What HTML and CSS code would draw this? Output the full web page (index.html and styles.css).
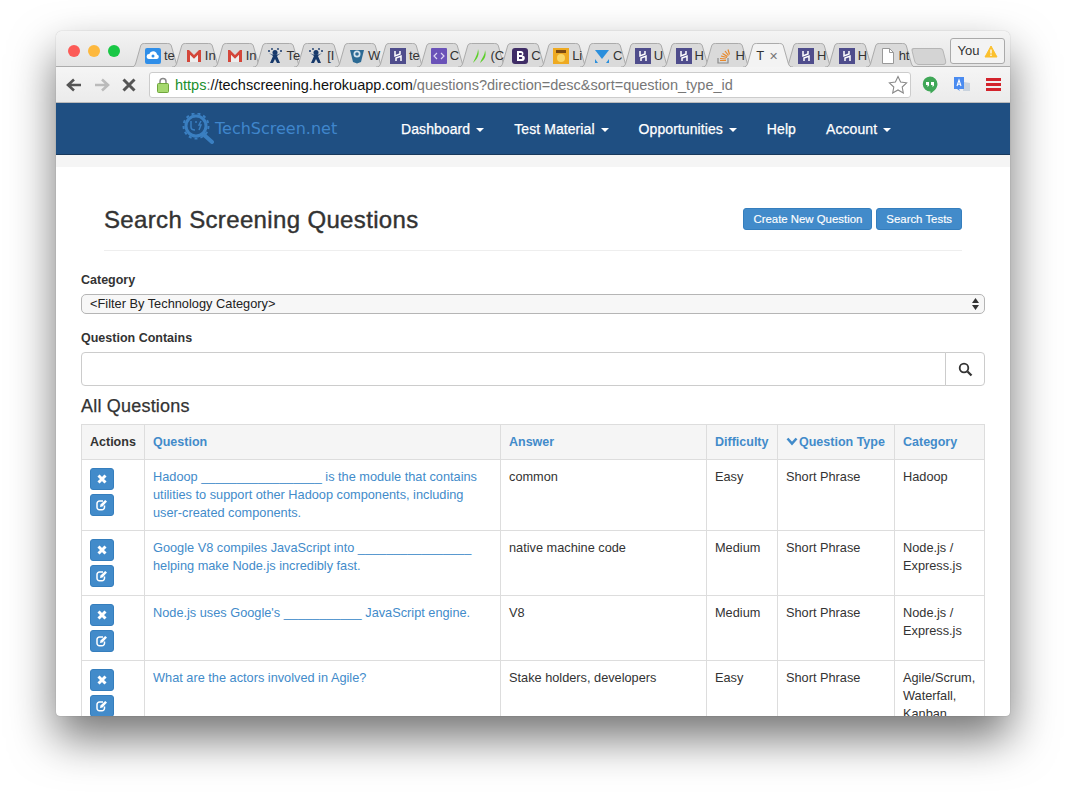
FILE: index.html
```html
<!DOCTYPE html>
<html lang="en">
<head>
    <meta charset="UTF-8">
    <title>Search Screening Questions</title>
    <link rel="stylesheet" href="styles.css">
</head>
<body>
    <svg class="defs" width="0" height="0">
        <symbol id="tab-bg" viewBox="0 0 52 24" preserveAspectRatio="none">
            <path d="M0 24C3 24 4 23 5 20L10 3C10.5 1 12 .5 14 .5H38C40 .5 41.5 1 42 3L47 20C48 23 49 24 52 24"/>
        </symbol>
        <symbol id="i-cloud" viewBox="0 0 16 16">
            <rect width="16" height="16" rx="2" fill="#2f8ee8"/>
            <path d="M4 11a2.5 2.5 0 0 1 .3-5A4 4 0 0 1 12 6.500a2.300 2.300 0 0 1 0 4.500z" fill="#fff"/>
            <circle cx="8" cy="8" r="1.500" fill="#2f8ee8"/>
        </symbol>
        <symbol id="i-gmail" viewBox="0 0 16 16">
            <path d="M1 14V2h2l5 5 5-5h2v12h-3V7L8 11 4 7v7z" fill="#d4463a"/>
            <path d="M4 14V7l4 4 4-4v7z" fill="#eee"/>
        </symbol>
        <symbol id="i-jira" viewBox="0 0 16 16">
            <circle cx="8" cy="4.500" r="2.500" fill="#17396b"/>
            <circle cx="2" cy="3" r="1" fill="#17396b"/><circle cx="14" cy="3" r="1" fill="#17396b"/>
            <circle cx="5" cy="1" r=".9" fill="#17396b"/><circle cx="11" cy="1" r=".9" fill="#17396b"/>
            <path d="M2 5l4 3-3 7h3l2-4 2 4h3l-3-7 4-3-3 1.500H5z" fill="#17396b"/>
        </symbol>
        <symbol id="i-bower" viewBox="0 0 16 16">
            <path d="M1 2h14l-1 4-2 8-4 1.500L4 14 2 6z" fill="#2c6a94"/>
            <circle cx="8" cy="6" r="3.500" fill="#d6e4ee"/><circle cx="8" cy="6" r="1.800" fill="#2c6a94"/>
        </symbol>
        <symbol id="i-heroku" viewBox="0 0 16 16">
            <rect width="16" height="16" fill="#4f4d8c"/>
            <path d="M5 3v5l5-2V3M11 13V8L6 10v3" fill="none" stroke="#fff" stroke-width="1.500"/>
        </symbol>
        <symbol id="i-code" viewBox="0 0 16 16">
            <rect width="16" height="16" rx="1" fill="#6a52b8"/>
            <path d="M6 5L3 8l3 3M10 5l3 3-3 3" fill="none" stroke="#dcd6f2" stroke-width="1.200"/>
        </symbol>
        <symbol id="i-green" viewBox="0 0 16 16">
            <path d="M6 1C6 6 3 10 1 15 5 11 8 7 6 1zM13 2c0 5-3 8-5 13 4-3 7-7 5-13z" fill="#5ccf2a"/>
        </symbol>
        <symbol id="i-boot" viewBox="0 0 16 16">
            <rect width="16" height="16" rx="3" fill="#3f2d66"/>
            <path d="M5 3h4a2.500 2.500 0 0 1 1.500 4.500A2.700 2.700 0 0 1 9.500 13H5zM7 5v2h2a1 1 0 0 0 0-2zM7 9v2h2.300a1 1 0 0 0 0-2z" fill="#fff" fill-rule="evenodd"/>
        </symbol>
        <symbol id="i-orange" viewBox="0 0 16 16">
            <rect width="16" height="16" fill="#eeaa22"/>
            <rect x="3" y="2" width="10" height="3" fill="#7b4a12"/>
            <circle cx="8" cy="10" r="4" fill="#f9d768"/>
        </symbol>
        <symbol id="i-vee" viewBox="0 0 16 16">
            <path d="M1 2h14L8 11z" fill="#2b8fdc"/>
            <path d="M1 11l3 4H1zM15 11l-3 4h3z" fill="#2b8fdc"/>
        </symbol>
        <symbol id="i-stack" viewBox="0 0 16 16">
            <path d="M2 10v5h10v-5" fill="none" stroke="#8a8a8a" stroke-width="1.200"/>
            <path d="M4 12.500h6M4 10.500l6 .5M5 8l6 1.500M6.500 5.500l5 3M9 3l3.500 4.500M12 1.500l1.500 5" fill="none" stroke="#e8882a" stroke-width="1.200"/>
        </symbol>
        <symbol id="i-doc" viewBox="0 0 16 16">
            <path d="M2.500 .5h7l4 4v11h-11z" fill="#fff" stroke="#999"/>
            <path d="M9.500 .5v4h4" fill="none" stroke="#999"/>
        </symbol>
        <symbol id="i-remove" viewBox="0 0 12 12">
            <path d="M2.500 2.500l7 7M9.500 2.500l-7 7" fill="none" stroke="#fff" stroke-width="3"/>
        </symbol>
        <symbol id="i-edit" viewBox="0 0 14 14">
            <path d="M9.500 7.500v1.800A2.500 2.500 0 0 1 7 11.800H4.500A2.500 2.500 0 0 1 2 9.300V5.500A2.500 2.500 0 0 1 4.500 3H8" fill="none" stroke="#fff" stroke-width="1.500"/>
            <path d="M5.500 6.500l-.5 2.500 2.500-.5 4.500-5-1.800-1.500z" fill="#fff"/>
        </symbol>
    </svg>

    <div class="window">
        <div class="tabstrip">
            <div class="lights">
                <span class="light red"></span>
                <span class="light amber"></span>
                <span class="light green"></span>
            </div>
            <div class="tabs">
                <div class="tab"><svg class="tab-bg"><use href="#tab-bg"/></svg><svg class="fav"><use href="#i-cloud"/></svg><span class="tab-label">te</span></div>
                <div class="tab"><svg class="tab-bg"><use href="#tab-bg"/></svg><svg class="fav"><use href="#i-gmail"/></svg><span class="tab-label">In</span></div>
                <div class="tab"><svg class="tab-bg"><use href="#tab-bg"/></svg><svg class="fav"><use href="#i-gmail"/></svg><span class="tab-label">In</span></div>
                <div class="tab"><svg class="tab-bg"><use href="#tab-bg"/></svg><svg class="fav"><use href="#i-jira"/></svg><span class="tab-label">Te</span></div>
                <div class="tab"><svg class="tab-bg"><use href="#tab-bg"/></svg><svg class="fav"><use href="#i-jira"/></svg><span class="tab-label">[I</span></div>
                <div class="tab"><svg class="tab-bg"><use href="#tab-bg"/></svg><svg class="fav"><use href="#i-bower"/></svg><span class="tab-label">W</span></div>
                <div class="tab"><svg class="tab-bg"><use href="#tab-bg"/></svg><svg class="fav"><use href="#i-heroku"/></svg><span class="tab-label">te</span></div>
                <div class="tab"><svg class="tab-bg"><use href="#tab-bg"/></svg><svg class="fav"><use href="#i-code"/></svg><span class="tab-label">C</span></div>
                <div class="tab"><svg class="tab-bg"><use href="#tab-bg"/></svg><svg class="fav"><use href="#i-green"/></svg><span class="tab-label">(C</span></div>
                <div class="tab"><svg class="tab-bg"><use href="#tab-bg"/></svg><svg class="fav"><use href="#i-boot"/></svg><span class="tab-label">C</span></div>
                <div class="tab"><svg class="tab-bg"><use href="#tab-bg"/></svg><svg class="fav"><use href="#i-orange"/></svg><span class="tab-label">Li</span></div>
                <div class="tab"><svg class="tab-bg"><use href="#tab-bg"/></svg><svg class="fav"><use href="#i-vee"/></svg><span class="tab-label">C</span></div>
                <div class="tab"><svg class="tab-bg"><use href="#tab-bg"/></svg><svg class="fav"><use href="#i-heroku"/></svg><span class="tab-label">U</span></div>
                <div class="tab"><svg class="tab-bg"><use href="#tab-bg"/></svg><svg class="fav"><use href="#i-heroku"/></svg><span class="tab-label">H</span></div>
                <div class="tab"><svg class="tab-bg"><use href="#tab-bg"/></svg><svg class="fav"><use href="#i-stack"/></svg><span class="tab-label">H</span></div>
                <div class="tab active"><svg class="tab-bg"><use href="#tab-bg"/></svg><span class="tab-label">T</span><span class="tab-close">&#10005;</span></div>
                <div class="tab"><svg class="tab-bg"><use href="#tab-bg"/></svg><svg class="fav"><use href="#i-heroku"/></svg><span class="tab-label">H</span></div>
                <div class="tab"><svg class="tab-bg"><use href="#tab-bg"/></svg><svg class="fav"><use href="#i-heroku"/></svg><span class="tab-label">H</span></div>
                <div class="tab"><svg class="tab-bg"><use href="#tab-bg"/></svg><svg class="fav"><use href="#i-doc"/></svg><span class="tab-label">ht</span></div>
            </div>
            <div class="newtab"></div>
            <div class="profile">You
                <svg width="14" height="13" viewBox="0 0 14 13"><path d="M7 1l6 11H1z" fill="#fbc02d" stroke="#fbc02d" stroke-linejoin="round"/><path d="M7 4.500v4M7 9.500v1.500" stroke="#fff" stroke-width="1.300"/></svg>
            </div>
        </div>

        <div class="toolbar">
            <svg class="tool" width="18" height="16" viewBox="0 0 18 16"><path d="M16 8H4M9 2.500L3 8l6 5.500" fill="none" stroke="#555" stroke-width="2.600"/></svg>
            <svg class="tool" width="18" height="16" viewBox="0 0 18 16"><path d="M2 8h12M9 2.500L15 8l-6 5.500" fill="none" stroke="#bbb" stroke-width="2.600"/></svg>
            <svg class="tool" width="16" height="16" viewBox="0 0 16 16"><path d="M2.500 2.500l11 11M13.500 2.500l-11 11" fill="none" stroke="#555" stroke-width="3"/></svg>
            <div class="omnibox">
                <svg class="lock" width="12" height="16" viewBox="0 0 12 16"><path d="M3 7V4.500a3 3 0 0 1 6 0V7" fill="none" stroke="#888" stroke-width="1.500"/><rect x=".5" y="6.500" width="11" height="9" rx="1" fill="#a5d86e" stroke="#6fa63c"/></svg>
                <span class="url"><span class="url-scheme">https</span><span class="url-rest">:</span><span class="url-host">//techscreening.herokuapp.com</span><span class="url-rest">/questions?direction=desc&amp;sort=question_type_id</span></span>
                <svg class="star" width="20" height="19" viewBox="0 0 20 19"><path d="M10 1.500l2.600 5.500 6 .8-4.400 4.200 1.100 6L10 15l-5.300 3 1.100-6L1.400 7.800l6-.8z" fill="#fff" stroke="#888" stroke-width="1.100"/></svg>
            </div>
            <div class="extensions">
                <svg width="16" height="18" viewBox="0 0 16 18"><path d="M8 .5a7.500 7.500 0 0 1 7.500 7.500c0 4.500-4 7.500-7 9.500v-2A7.500 7.500 0 0 1 8 .5z" fill="#3fa757"/><path d="M4 6h3v3.500L5.500 11V9H4zM9 6h3v3.500L10.500 11V9H9z" fill="#fff"/></svg>
                <svg width="18" height="18" viewBox="0 0 18 18"><path d="M11 6l6 1v8h-7z" fill="#c9d3de"/><path d="M1 1h10v12H6l1 2-3-2H1z" fill="#4a8bf0"/><path d="M4 10l2-6 2 6M4.800 8.300h2.400" fill="none" stroke="#fff" stroke-width="1.100"/></svg>
                <div class="hamburger"><span></span><span></span><span></span></div>
            </div>
        </div>

        <nav class="navbar">
            <a class="brand">
                <svg width="34" height="31" viewBox="0 0 34 31"><circle cx="14" cy="13" r="10" fill="none" stroke="#3a7fc1" stroke-width="3"/><circle cx="14" cy="13" r="12.500" fill="none" stroke="#3a7fc1" stroke-width="2" stroke-dasharray="3 3"/><path d="M21 21l9 8" stroke="#3a7fc1" stroke-width="4" stroke-linecap="round"/><path d="M9 8v6c0 2 2 3 4 3M13 9h2M19 8l-2 4 2 0-2 5" fill="none" stroke="#3a7fc1" stroke-width="1.500"/></svg>
                <span class="brand-name">TechScreen.net</span>
            </a>
            <ul class="nav-menu">
                <li>Dashboard <span class="caret"></span></li>
                <li>Test Material <span class="caret"></span></li>
                <li>Opportunities <span class="caret"></span></li>
                <li>Help</li>
                <li>Account <span class="caret"></span></li>
            </ul>
        </nav>
        <div class="nav-gap"></div>

        <main class="content">
            <div class="page-header">
                <h1>Search Screening Questions</h1>
                <div class="header-buttons">
                    <a class="btn">Create New Question</a>
                    <a class="btn">Search Tests</a>
                </div>
            </div>

            <label class="field-label">Category</label>
            <div class="select-wrap">
                <select class="filter-select">
                    <option>&lt;Filter By Technology Category&gt;</option>
                </select>
                <svg class="select-arrows" width="7" height="12" viewBox="0 0 7 12"><path d="M3.500 0L7 5H0zM3.500 12L0 7h7z" fill="#333"/></svg>
            </div>

            <label class="field-label">Question Contains</label>
            <div class="search-group">
                <input class="search-input" type="text">
                <button class="search-btn" type="button">
                    <svg width="15" height="15" viewBox="0 0 15 15"><circle cx="6" cy="6" r="4.300" fill="none" stroke="#333" stroke-width="1.800"/><path d="M9.500 9.500l4 4" stroke="#333" stroke-width="2.300"/></svg>
                </button>
            </div>

            <h2>All Questions</h2>
            <table class="questions">
                <thead>
                    <tr>
                        <th class="col-actions">Actions</th>
                        <th class="col-question"><a>Question</a></th>
                        <th class="col-answer"><a>Answer</a></th>
                        <th class="col-difficulty"><a>Difficulty</a></th>
                        <th class="col-type"><a><svg class="chevron" width="12" height="9" viewBox="0 0 12 9"><path d="M1.500 1.500L6 6.500l4.500-5" fill="none" stroke="#428bca" stroke-width="2.600"/></svg>Question Type</a></th>
                        <th class="col-category"><a>Category</a></th>
                    </tr>
                </thead>
                <tbody>
                    <tr>
                        <td><a class="btn-icon"><svg width="12" height="12"><use href="#i-remove"/></svg></a><a class="btn-icon"><svg width="14" height="14"><use href="#i-edit"/></svg></a></td>
                        <td><a>Hadoop _________________ is the module that contains utilities to support other Hadoop components, including user-created components.</a></td>
                        <td>common</td>
                        <td>Easy</td>
                        <td>Short Phrase</td>
                        <td>Hadoop</td>
                    </tr>
                    <tr>
                        <td><a class="btn-icon"><svg width="12" height="12"><use href="#i-remove"/></svg></a><a class="btn-icon"><svg width="14" height="14"><use href="#i-edit"/></svg></a></td>
                        <td><a>Google V8 compiles JavaScript into ________________ helping make Node.js incredibly fast.</a></td>
                        <td>native machine code</td>
                        <td>Medium</td>
                        <td>Short Phrase</td>
                        <td>Node.js / Express.js</td>
                    </tr>
                    <tr>
                        <td><a class="btn-icon"><svg width="12" height="12"><use href="#i-remove"/></svg></a><a class="btn-icon"><svg width="14" height="14"><use href="#i-edit"/></svg></a></td>
                        <td><a>Node.js uses Google's ___________ JavaScript engine.</a></td>
                        <td>V8</td>
                        <td>Medium</td>
                        <td>Short Phrase</td>
                        <td>Node.js / Express.js</td>
                    </tr>
                    <tr>
                        <td><a class="btn-icon"><svg width="12" height="12"><use href="#i-remove"/></svg></a><a class="btn-icon"><svg width="14" height="14"><use href="#i-edit"/></svg></a></td>
                        <td><a>What are the actors involved in Agile?</a></td>
                        <td>Stake holders, developers</td>
                        <td>Easy</td>
                        <td>Short Phrase</td>
                        <td>Agile/Scrum, Waterfall, Kanban</td>
                    </tr>
                </tbody>
            </table>
        </main>
    </div>
</body>
</html>
```

FILE: styles.css
```css
html, body {
    height: 100%;
}
body {
    margin: 0;
    padding: 31px 56px 0;
    box-sizing: border-box;
    background-color: #fff;
    overflow: hidden;
    font-family: "Liberation Sans", Arial, sans-serif;
    font-size: 12.75px;
    line-height: 18px;
    color: #333;
}
.defs {
    position: absolute;
}
.window {
    display: flex;
    flex-direction: column;
    width: 954px;
    height: 685px;
    overflow: hidden;
    border-radius: 6px 6px 4px 4px;
    background-color: #fff;
    box-shadow: 0 22px 45px rgba(0, 0, 0, 0.55), 0 0 1px rgba(0, 0, 0, 0.4);
}

/* browser chrome */
.tabstrip {
    display: flex;
    flex: none;
    height: 36px;
    box-sizing: border-box;
    background: linear-gradient(#f4f4f4, #e4e4e4);
    border-bottom: 1px solid #acacac;
}
.lights {
    display: flex;
    gap: 8px;
    width: 75px;
    padding: 14px 0 0 12px;
    box-sizing: border-box;
}
.light {
    width: 12px;
    height: 12px;
    border-radius: 50%;
}
.light.red { background-color: #fc5b57; }
.light.amber { background-color: #fdb83e; }
.light.green { background-color: #19c745; }
.tabs {
    display: flex;
    padding-top: 12px;
}
.tab {
    position: relative;
    display: flex;
    align-items: flex-start;
    gap: 3px;
    flex: none;
    width: 50px;
    height: 24px;
    margin-right: -9.2px;
    padding: 5px 0 0 14px;
    box-sizing: border-box;
    font-size: 13px;
    line-height: 16px;
    color: #333;
}
.tab-bg {
    position: absolute;
    left: 0;
    top: 0;
    width: 100%;
    height: 100%;
    fill: #dadada;
    stroke: #a9a9a9;
    stroke-width: 1;
}
.tab.active {
    z-index: 2;
    padding-left: 13px;
}
.tab.active .tab-bg {
    fill: #f3f3f3;
}
.fav {
    position: relative;
    flex: none;
    width: 16px;
    height: 16px;
}
.tab-label {
    position: relative;
    white-space: nowrap;
}
.tab-close {
    position: relative;
    margin-left: 2px;
    font-size: 11px;
    color: #777;
}
.newtab {
    width: 30px;
    height: 15px;
    margin: 17px 0 0 7px;
    border: 1px solid #b5b5b5;
    border-radius: 3px 3px 4px 4px;
    background-color: #d4d4d4;
    transform: skewX(14deg);
}
.profile {
    display: flex;
    align-items: center;
    justify-content: center;
    gap: 5px;
    width: 55px;
    height: 26px;
    margin: 7px 0 0 5px;
    box-sizing: border-box;
    border: 1px solid #aaa;
    border-radius: 3px;
    background-color: #f3f3f3;
    font-size: 13px;
}
.toolbar {
    display: flex;
    align-items: center;
    flex: none;
    height: 36px;
    padding-left: 9px;
    box-sizing: border-box;
    background: linear-gradient(#f5f5f5, #ebebeb);
    border-bottom: 1px solid #bbb;
}
.tool {
    flex: none;
    margin-right: 10px;
}
.omnibox {
    display: flex;
    align-items: center;
    width: 762px;
    height: 26px;
    margin-left: 2px;
    padding: 0 2px 0 7px;
    box-sizing: border-box;
    background-color: #fff;
    border: 1px solid #ccc;
    border-radius: 3px;
}
.lock {
    flex: none;
    margin-right: 6px;
}
.url {
    flex: 1;
    font-size: 14.5px;
    white-space: nowrap;
}
.url-scheme { color: #1a8f2c; }
.url-host { color: #111; }
.url-rest { color: #777; }
.extensions {
    display: flex;
    align-items: center;
    gap: 15px;
    margin-left: 11px;
}
.hamburger {
    display: flex;
    flex-direction: column;
    gap: 2px;
    width: 15px;
}
.hamburger span {
    height: 3px;
    background-color: #d3232c;
}

/* site navbar */
.navbar {
    display: flex;
    flex: none;
    height: 52px;
    box-sizing: border-box;
    background-color: #1f4f82;
    border-bottom: 1px solid #18395c;
}
.brand {
    display: flex;
    align-items: center;
    width: 204px;
    margin-left: 126px;
    box-sizing: border-box;
}
.brand-name {
    margin-left: -1px;
    font-family: "DejaVu Sans", sans-serif;
    font-size: 16px;
    color: #3f86cc;
}
.nav-menu {
    display: flex;
    margin: 0;
    padding: 0;
    list-style: none;
}
.nav-menu li {
    padding: 16px 15px;
    font-size: 14px;
    line-height: 20px;
    letter-spacing: 0.08px;
    color: #fff;
    -webkit-text-stroke: 0.25px #fff;
}
.caret {
    display: inline-block;
    width: 0;
    height: 0;
    margin-left: 2px;
    vertical-align: middle;
    border-top: 4px solid #fff;
    border-left: 4px solid transparent;
    border-right: 4px solid transparent;
}
.nav-gap {
    flex: none;
    height: 12px;
    background-color: #f5f5f5;
}

/* page */
.content {
    flex: 1;
    padding: 0 25px;
}
.page-header {
    display: flex;
    align-items: center;
    justify-content: space-between;
    height: 84px;
    margin: 0 23px 20px;
    padding-top: 23px;
    box-sizing: border-box;
    border-bottom: 1px solid #eee;
}
h1 {
    margin: 0;
    font-size: 24px;
    font-weight: 500;
    line-height: 26px;
    letter-spacing: 0.35px;
    color: #333;
    -webkit-text-stroke: 0.4px #333;
}
.header-buttons {
    display: flex;
    gap: 4px;
    margin-top: -2px;
}
.btn {
    padding: 2px 9px;
    font-size: 11.4px;
    line-height: 16px;
    color: #fff;
    background-color: #428bca;
    border: 1px solid #357ebd;
    border-radius: 3px;
    -webkit-text-stroke: 0.15px #fff;
}
.field-label {
    display: block;
    margin-bottom: 5px;
    font-size: 12.5px;
    font-weight: bold;
}
.select-wrap {
    position: relative;
    margin-bottom: 15px;
}
.filter-select {
    display: block;
    width: 100%;
    height: 20px;
    padding: 0 8px 2px;
    appearance: none;
    font-family: inherit;
    font-size: 12.8px;
    color: #222;
    background-color: #f7f7f7;
    border: 1px solid #b5b5b5;
    border-radius: 5px;
}
.select-arrows {
    position: absolute;
    right: 6px;
    top: 4px;
}
.search-group {
    display: flex;
    height: 34px;
    margin-bottom: 9px;
}
.search-input {
    flex: 1;
    min-width: 0;
    padding: 6px 12px;
    box-sizing: border-box;
    background-color: #fff;
    border: 1px solid #ccc;
    border-radius: 4px 0 0 4px;
}
.search-btn {
    display: flex;
    align-items: center;
    justify-content: center;
    width: 40px;
    padding: 0;
    margin-left: -1px;
    background-color: #fff;
    border: 1px solid #ccc;
    border-radius: 0 4px 4px 0;
}
h2 {
    margin: 0 0 7px;
    font-size: 18px;
    font-weight: 500;
    line-height: 22px;
    letter-spacing: 0.2px;
    color: #333;
    -webkit-text-stroke: 0.25px #333;
}
.questions {
    width: 903px;
    table-layout: fixed;
    border-collapse: collapse;
}
.questions th, .questions td {
    padding: 8px;
    text-align: left;
    vertical-align: top;
    border: 1px solid #ddd;
}
.questions th {
    height: 35px;
    box-sizing: border-box;
    background-color: #f5f5f5;
    font-size: 12.5px;
    font-weight: bold;
    white-space: nowrap;
}
.questions a {
    color: #428bca;
}
.col-actions { width: 63px; }
.col-question { width: 356px; }
.col-answer { width: 206px; }
.col-difficulty { width: 71px; }
.col-type { width: 117px; }
.col-category { width: 90px; }
.chevron {
    margin-right: 1px;
}
.questions .btn-icon {
    display: flex;
    align-items: center;
    justify-content: center;
    width: 24px;
    height: 22px;
    margin-bottom: 4px;
    box-sizing: border-box;
    background-color: #428bca;
    border: 1px solid #357ebd;
    border-radius: 3px;
}
.questions td:first-child {
    padding-bottom: 4px;
}
```
